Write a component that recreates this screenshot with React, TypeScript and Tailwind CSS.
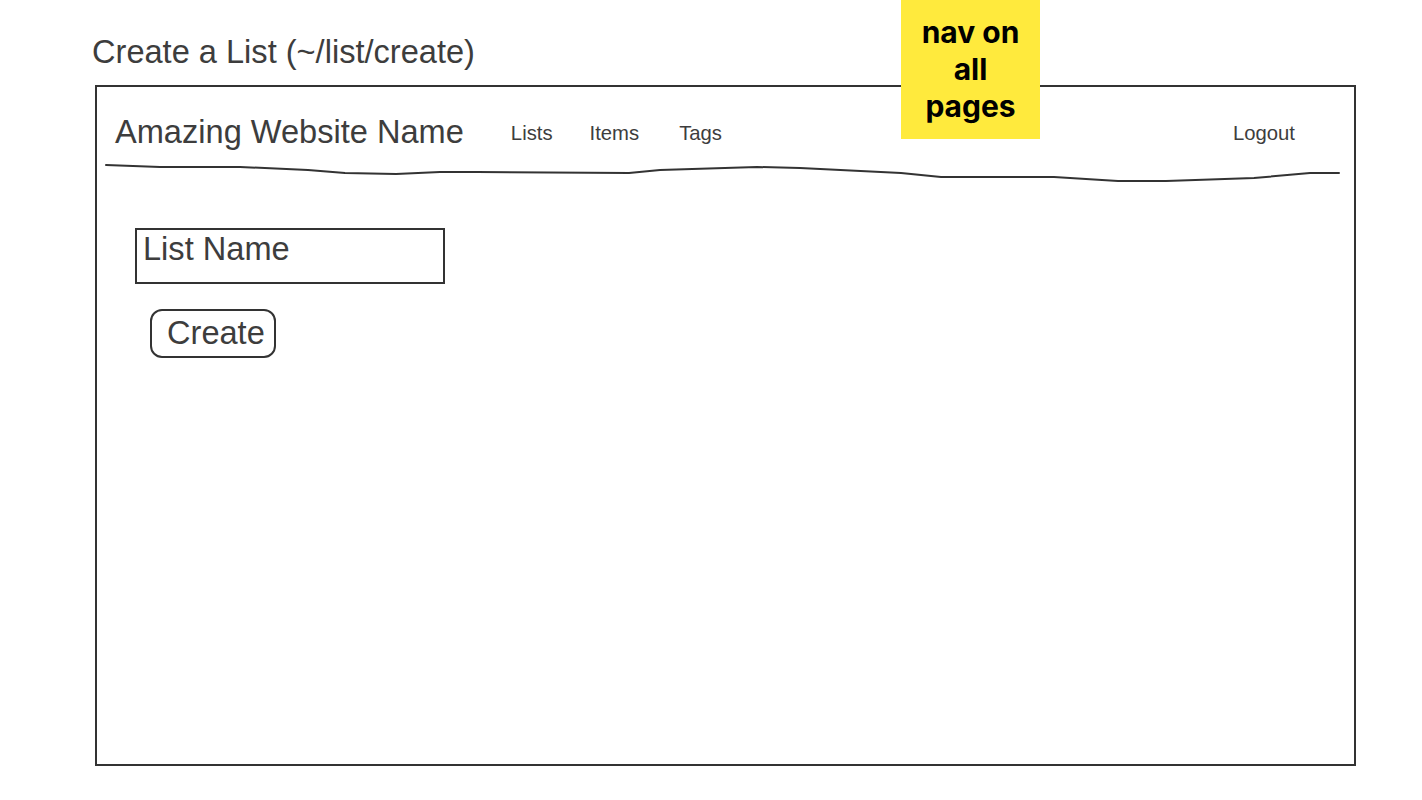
const navLinks = [
  { label: "Lists", ml: "ml-[47px]" },
  { label: "Items", ml: "ml-[37px]" },
  { label: "Tags", ml: "ml-[40px]" },
];

// hand-drawn divider under the nav (coords relative to svg at x=104,y=160)
const WAVE =
  "M2 5 L56 7 L136 7 L204 10 L241 13 L292 14 L336 12 L373 12 L525 13 L556 10 L653 7 L696 8 L797 13 L837 17 L950 17 L1014 21 L1062 21 L1150 18 L1206 13 L1235 13";

const StickyNote = () => (
  <div className="absolute left-[901px] top-0 w-[139px] h-[139px] bg-[#ffea3d] pt-[14px] text-center text-[30px] leading-[37px] font-bold text-black font-['Inter',sans-serif]">
    <div>nav on</div>
    <div>all</div>
    <div>pages</div>
  </div>
);

export default function App() {
  return (
    <div className="relative w-[1422px] h-[800px] bg-white overflow-hidden font-['Liberation_Sans',Arial,sans-serif] text-[#3d3d3d]">
      <div className="pl-[92px] pt-[36px]">
        <h1 className="text-[32.6px] leading-none">Create a List (~/list/create)</h1>

        {/* wireframe browser frame */}
        <div className="mt-[16px] ml-[3px] w-[1261px] h-[681px] border-2 border-[#333]">
          {/* nav */}
          <div className="flex items-start pt-[29px] pl-[18px] pr-[59px]">
            <span className="text-[32.6px] leading-none">Amazing Website Name</span>
            {navLinks.map((l) => (
              <span key={l.label} className={`${l.ml} mt-[7px] text-[20.3px] leading-none`}>
                {l.label}
              </span>
            ))}
            <span className="ml-auto mt-[7px] text-[20.3px] leading-none">Logout</span>
          </div>
          <svg width="1240" height="24" className="mt-[12px] ml-[7px] block" viewBox="0 0 1240 24">
            <path d={WAVE} fill="none" stroke="#333" strokeWidth="2" strokeLinejoin="round" strokeLinecap="round" />
          </svg>

          {/* form */}
          <div className="mt-[44px] ml-[38px] w-[310px] h-[56px] border-2 border-[#333] pt-[3px] pl-[6px] text-[32.6px] leading-none">
            List Name
          </div>
          <button className="mt-[25px] ml-[53px] h-[49px] pl-[15px] pr-[9px] border-2 border-[#333] rounded-[12px] text-[32.6px] leading-none flex items-center">
            Create
          </button>
        </div>
      </div>
      <StickyNote />
    </div>
  );
}
